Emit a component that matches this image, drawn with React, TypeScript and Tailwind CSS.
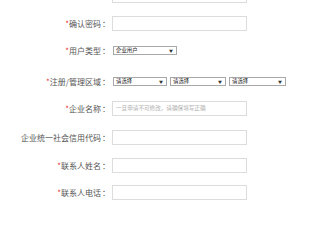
import React from "react";

const font = { fontFamily: '"Microsoft YaHei", "Noto Sans CJK SC", sans-serif' };

const Label = ({ text, required }: { text?: string; required?: boolean }) => (
  <div className="w-[111px] shrink-0 text-right text-[8px] leading-none text-[#555] whitespace-nowrap pr-[1px]">
    {text && (
      <>
        {required && <span className="text-[#e4393c]">*</span>}
        {text}
        <span className="ml-[1px]">：</span>
      </>
    )}
  </div>
);

const Input = ({ placeholder }: { placeholder?: string }) => (
  <div className="ml-[1px] w-[135px] h-[15px] border border-[#dcdcdc] bg-white flex items-center px-[3px]">
    {placeholder && (
      <span className="text-[5.6px] leading-none text-[#b0b0b0] whitespace-nowrap">{placeholder}</span>
    )}
  </div>
);

const Select = ({ value, width }: { value: string; width: string }) => (
  <div
    className={`${width} h-[9px] border border-[#a8a8a8] bg-white flex items-center justify-between pl-[2px] pr-[3px]`}
  >
    <span className="text-[5.4px] leading-none text-[#222] whitespace-nowrap">{value}</span>
    <span className="text-[4px] leading-none text-[#333]">▼</span>
  </div>
);

export default function App() {
  return (
    <div className="w-[320px] h-[200px] overflow-hidden bg-white" style={font}>
      <div className="flex flex-col -mt-[12px]">
        {/* 密码 (label scrolled off the top) */}
        <div className="flex items-center">
          <Label />
          <Input />
        </div>
        <div className="flex items-center mt-[13px]">
          <Label text="确认密码" required />
          <Input />
        </div>
        <div className="flex items-center mt-[15px]">
          <Label text="用户类型" required />
          <div className="ml-[2px]">
            <Select value="企业用户" width="w-[64px]" />
          </div>
        </div>
        <div className="flex items-center mt-[22px]">
          <Label text="注册/管理区域" required />
          <div className="ml-[2px] flex gap-[3px]">
            <Select value="请选择" width="w-[54px]" />
            <Select value="请选择" width="w-[56px]" />
            <Select value="请选择" width="w-[57px]" />
          </div>
        </div>
        <div className="flex items-center mt-[15px]">
          <Label text="企业名称" required />
          <Input placeholder="一旦申请不可修改，请确保填写正确" />
        </div>
        <div className="flex items-center mt-[14px]">
          <Label text="企业统一社会信用代码" />
          <Input />
        </div>
        <div className="flex items-center mt-[13px]">
          <Label text="联系人姓名" required />
          <Input />
        </div>
        <div className="flex items-center mt-[12px]">
          <Label text="联系人电话" required />
          <Input />
        </div>
      </div>
    </div>
  );
}
